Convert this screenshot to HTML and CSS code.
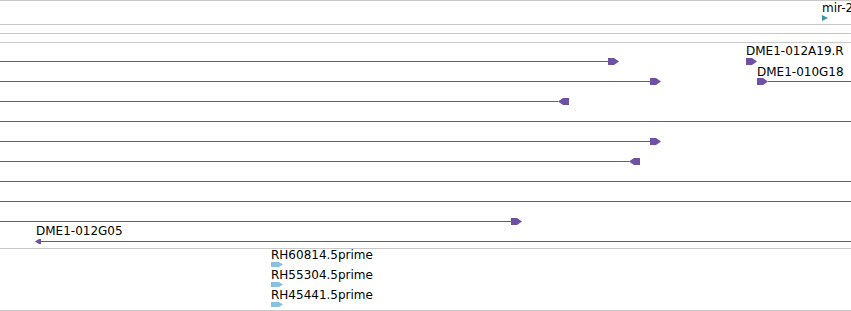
FILE: index.html
```html
<!DOCTYPE html>
<html lang="en">
<head>
  <meta charset="UTF-8">
  <title>Tracks</title>
  <link rel="stylesheet" href="styles.css">
</head>
<body>
  <div class="browser">

    <div class="track track-mirna">
      <div class="label" style="left:822px; top:0px">mir-2</div>
      <div class="glyph mirna" style="left:822px; top:14px; width:6px">
        <svg class="head" width="6" height="6" viewBox="0 0 6 6"><path d="M0 0 L6 3 L0 6 Z"/></svg>
      </div>
    </div>

    <div class="track track-empty"></div>
    <div class="track track-empty"></div>

    <div class="track track-clones">
      <!-- row 1 -->
      <div class="glyph plus" style="left:0px; top:15px; width:619px">
        <div class="stem"></div>
        <svg class="head" width="11" height="7" viewBox="0 0 11 7"><path d="M0 0 H6 L11 3.5 L6 7 H0 Z"/></svg>
      </div>
      <div class="label" style="left:746px; top:1px">DME1-012A19.R</div>
      <div class="glyph plus" style="left:746px; top:15px; width:11px">
        <svg class="head" width="11" height="7" viewBox="0 0 11 7"><path d="M0 0 H6 L11 3.5 L6 7 H0 Z"/></svg>
      </div>

      <!-- row 2 -->
      <div class="glyph plus" style="left:0px; top:35px; width:661px">
        <div class="stem"></div>
        <svg class="head" width="11" height="7" viewBox="0 0 11 7"><path d="M0 0 H6 L11 3.5 L6 7 H0 Z"/></svg>
      </div>
      <div class="label" style="left:757px; top:22px">DME1-010G18</div>
      <div class="glyph plus" style="left:757px; top:35px; width:94px">
        <svg class="head" width="11" height="7" viewBox="0 0 11 7"><path d="M0 0 H6 L11 3.5 L6 7 H0 Z"/></svg>
        <div class="stem"></div>
      </div>

      <!-- row 3 -->
      <div class="glyph minus" style="left:0px; top:55px; width:569px">
        <div class="stem"></div>
        <svg class="head" width="11" height="7" viewBox="0 0 11 7"><path d="M11 0 H5 L0 3.5 L5 7 H11 Z"/></svg>
      </div>

      <!-- row 4 -->
      <div class="glyph plus" style="left:0px; top:75px; width:851px">
        <div class="stem"></div>
      </div>

      <!-- row 5 -->
      <div class="glyph plus" style="left:0px; top:95px; width:661px">
        <div class="stem"></div>
        <svg class="head" width="11" height="7" viewBox="0 0 11 7"><path d="M0 0 H6 L11 3.5 L6 7 H0 Z"/></svg>
      </div>

      <!-- row 6 -->
      <div class="glyph minus" style="left:0px; top:115px; width:640px">
        <div class="stem"></div>
        <svg class="head" width="11" height="7" viewBox="0 0 11 7"><path d="M11 0 H5 L0 3.5 L5 7 H11 Z"/></svg>
      </div>

      <!-- rows 7, 8 -->
      <div class="glyph plus" style="left:0px; top:135px; width:851px">
        <div class="stem"></div>
      </div>
      <div class="glyph plus" style="left:0px; top:155px; width:851px">
        <div class="stem"></div>
      </div>

      <!-- row 9 -->
      <div class="glyph plus" style="left:0px; top:175px; width:522px">
        <div class="stem"></div>
        <svg class="head" width="11" height="7" viewBox="0 0 11 7"><path d="M0 0 H6 L11 3.5 L6 7 H0 Z"/></svg>
      </div>

      <!-- row 10 -->
      <div class="label" style="left:36px; top:181px">DME1-012G05</div>
      <div class="glyph minus" style="left:35px; top:195px; width:816px">
        <svg class="head small" width="6" height="5" viewBox="0 0 6 5"><path d="M6 0 H4 L0 2.5 L4 5 H6 Z"/></svg>
        <div class="stem"></div>
      </div>
    </div>

    <div class="track track-ests">
      <div class="label" style="left:271px; top:-1px">RH60814.5prime</div>
      <div class="glyph est" style="left:271px; top:13px; width:12px">
        <svg class="head" width="12" height="5" viewBox="0 0 12 5"><path d="M0 0 H8 L12 2.5 L8 5 H0 Z"/></svg>
      </div>
      <div class="label" style="left:271px; top:19px">RH55304.5prime</div>
      <div class="glyph est" style="left:271px; top:33px; width:12px">
        <svg class="head" width="12" height="5" viewBox="0 0 12 5"><path d="M0 0 H8 L12 2.5 L8 5 H0 Z"/></svg>
      </div>
      <div class="label" style="left:271px; top:39px">RH45441.5prime</div>
      <div class="glyph est" style="left:271px; top:53px; width:12px">
        <svg class="head" width="12" height="5" viewBox="0 0 12 5"><path d="M0 0 H8 L12 2.5 L8 5 H0 Z"/></svg>
      </div>
    </div>

  </div>
</body>
</html>
```

FILE: styles.css
```css
body {
  margin: 0;
  background: #fff;
  font-family: "DejaVu Sans", Verdana, sans-serif;
  font-size: 12px;
  color: #000;
  overflow: hidden;
}
.browser {
  width: 851px;
  border-top: 1px solid #c8c8c8;
}
.track {
  position: relative;
  border-bottom: 1px solid #c8c8c8;
  overflow: hidden;
}
.track-mirna {
  height: 23px;
}
.track-empty {
  height: 8px;
}
.track-clones {
  height: 205px;
}
.track-ests {
  height: 61px;
  overflow: visible;
}
.label {
  position: absolute;
  line-height: 14px;
  white-space: nowrap;
}
.glyph {
  position: absolute;
  display: flex;
  align-items: center;
  height: 7px;
  fill: #6f51a4;
}
.glyph .stem {
  flex: 1;
  height: 1px;
  background: #6f51a4;
}
.glyph .head {
  display: block;
  flex: none;
}
.glyph.mirna {
  height: 6px;
  fill: #3a93a6;
}
.glyph.est {
  height: 5px;
  fill: #8cc0e2;
}
```
